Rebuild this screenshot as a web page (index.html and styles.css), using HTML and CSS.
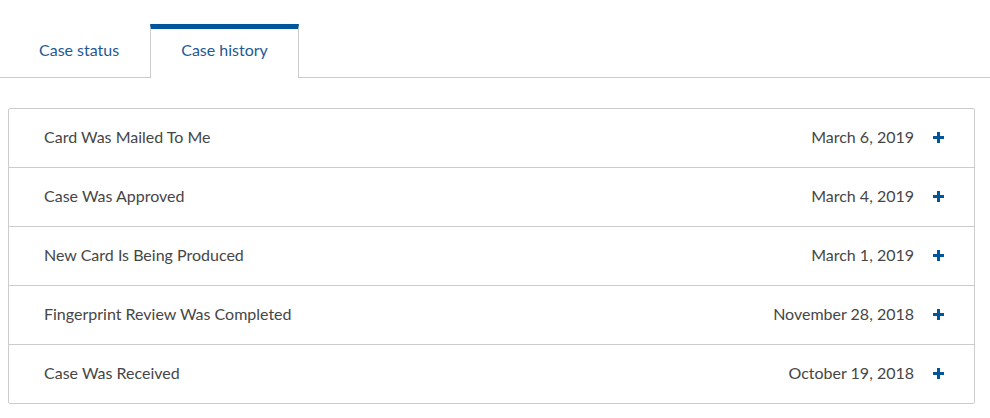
FILE: index.html
```html
<!DOCTYPE html>
<html lang="en">
<head>
<meta charset="UTF-8">
<meta name="viewport" content="width=device-width, initial-scale=1.0">
<title>Case history</title>
<link rel="stylesheet" href="styles.css">
</head>
<body>
    <div class="tabs">
        <div class="tab">Case status</div>
        <div class="tab active">Case history</div>
    </div>

    <div class="history">
        <div class="row">
            <span class="event">Card Was Mailed To Me</span>
            <span class="date">March 6, 2019</span>
            <svg class="plus" width="11" height="11" viewBox="0 0 11 11"><path d="M4 0h3v4h4v3H7v4H4V7H0V4h4z"/></svg>
        </div>
        <div class="row">
            <span class="event">Case Was Approved</span>
            <span class="date">March 4, 2019</span>
            <svg class="plus" width="11" height="11" viewBox="0 0 11 11"><path d="M4 0h3v4h4v3H7v4H4V7H0V4h4z"/></svg>
        </div>
        <div class="row">
            <span class="event">New Card Is Being Produced</span>
            <span class="date">March 1, 2019</span>
            <svg class="plus" width="11" height="11" viewBox="0 0 11 11"><path d="M4 0h3v4h4v3H7v4H4V7H0V4h4z"/></svg>
        </div>
        <div class="row">
            <span class="event">Fingerprint Review Was Completed</span>
            <span class="date">November 28, 2018</span>
            <svg class="plus" width="11" height="11" viewBox="0 0 11 11"><path d="M4 0h3v4h4v3H7v4H4V7H0V4h4z"/></svg>
        </div>
        <div class="row">
            <span class="event">Case Was Received</span>
            <span class="date">October 19, 2018</span>
            <svg class="plus" width="11" height="11" viewBox="0 0 11 11"><path d="M4 0h3v4h4v3H7v4H4V7H0V4h4z"/></svg>
        </div>
    </div>
</body>
</html>
```

FILE: styles.css
```css
body {
    font-family: "Lato", "Open Sans", Arial, sans-serif;
    font-size: 16px;
    margin: 0;
    background-color: #fff;
    color: #464646;
}
.tabs {
    display: flex;
    padding: 24px 0 0 8px;
    border-bottom: 1px solid #ccc;
}
.tab {
    height: 42px;
    line-height: 42px;
    padding: 0 30px 6px;
    border-top: 5px solid transparent;
    border-left: 1px solid transparent;
    border-right: 1px solid transparent;
    color: #1d5a94;
    margin-bottom: -1px;
}
.tab.active {
    border-top-color: #00559b;
    border-left-color: #ccc;
    border-right-color: #ccc;
    background-color: #fff;
    padding-bottom: 7px;
}
.history {
    margin: 30px 15px 0 8px;
    border: 1px solid #ccc;
    border-radius: 2px;
}
.row {
    display: flex;
    align-items: center;
    height: 54px;
    padding: 0 30px 4px 35px;
    border-bottom: 1px solid #ccc;
}
.row:last-child {
    border-bottom: none;
}
.event {
    flex: 1;
}
.date {
    margin-right: 19px;
}
.plus {
    fill: #00559b;
    margin-top: 2px;
}
```
